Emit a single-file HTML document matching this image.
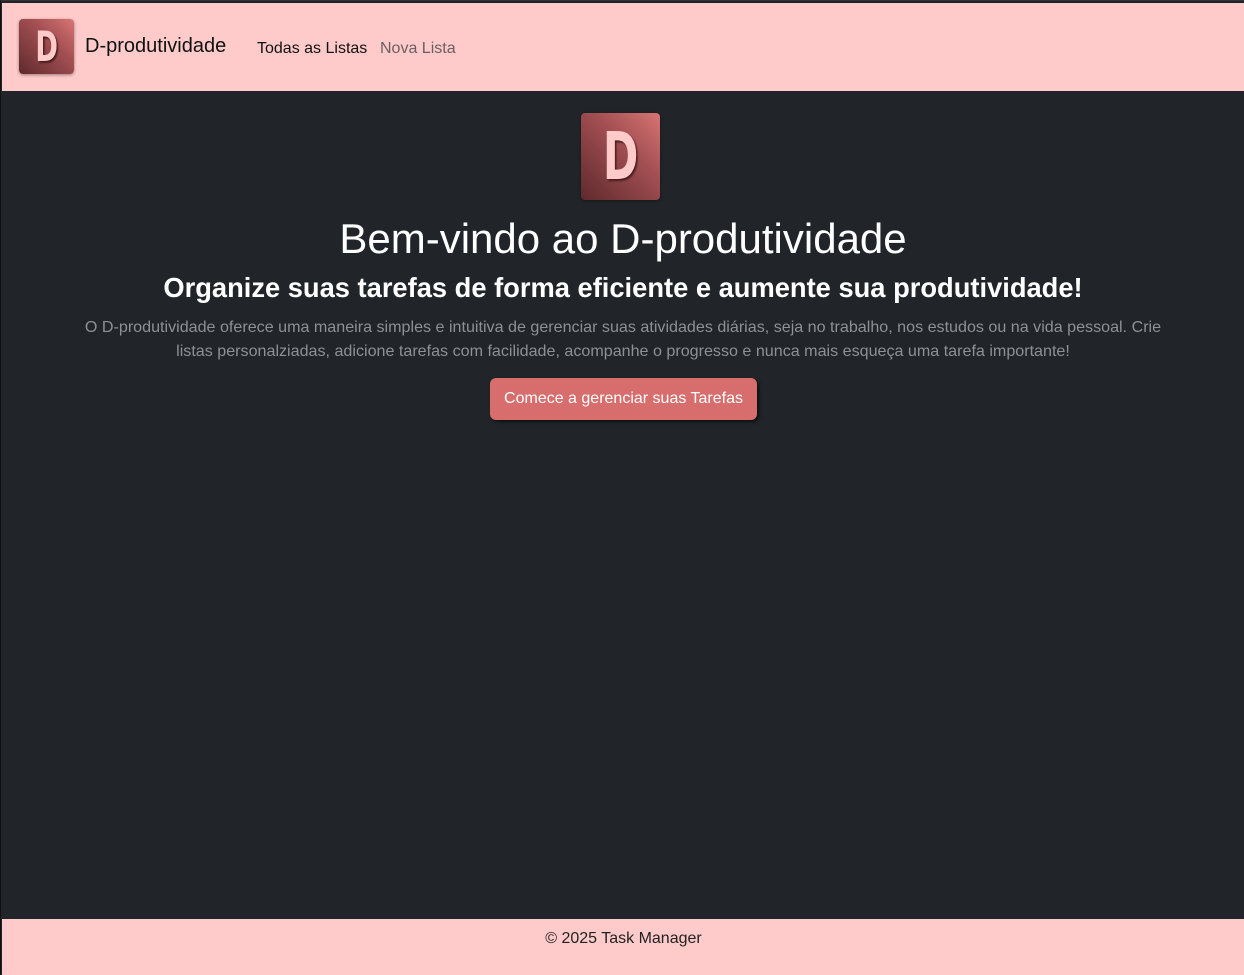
<!DOCTYPE html>
<html><head><meta charset="utf-8"><style>
*{box-sizing:border-box;margin:0;padding:0}
body{width:1244px;height:974px;background:#212529;font-family:"Liberation Sans",sans-serif;position:relative;overflow:hidden;border-left:1px solid #111;border-top:1px solid #333}
nav{position:absolute;left:1px;top:2px;width:1243px;height:88px;background:#ffcaca}
.logo{position:absolute;border-radius:4px;background:linear-gradient(45deg,#5e2a2d,#a34f52 60%,#d87474);box-shadow:0 1px 3px rgba(0,0,0,.4);color:#ffcaca;text-align:center;font-weight:bold;text-shadow:2px 2px 2px #4a1d1f;font-family:"DejaVu Sans Condensed","Liberation Sans Narrow",sans-serif}
.logo span{display:inline-block;transform:scaleX(.72)}
.brand{position:absolute;left:83px;top:32px;font-size:20px;color:#111}
.l1{position:absolute;left:255px;top:37px;font-size:16px;color:#111}
.l2{position:absolute;left:378px;top:37px;font-size:16px;color:#6c5f62}
h1{position:absolute;left:0;width:1244px;top:214px;text-align:center;color:#fff;font-size:42px;font-weight:500}
h2{position:absolute;left:0;width:1244px;top:271px;text-align:center;color:#fff;font-size:27.3px;font-weight:bold}
p{position:absolute;left:0;width:1244px;top:314px;text-align:center;color:#8d9094;font-size:16.1px;line-height:24px;white-space:nowrap}
.btn{position:absolute;left:489px;top:377px;width:267px;height:42px;background:#d76d6d;border-radius:6px;color:#fff;font-size:16px;text-align:center;line-height:42px;box-shadow:2px 2px 3px rgba(0,0,0,.6)}
footer{position:absolute;left:1px;top:918px;width:1243px;height:56px;background:#ffcaca;text-align:center;font-size:16px;color:#222;padding-top:11px}
</style></head><body>
<nav>
<div class="logo" style="left:17px;top:16px;width:55px;height:55px;font-size:42px;line-height:55px"><span>D</span></div>
<div class="brand">D-produtividade</div>
<div class="l1">Todas as Listas</div>
<div class="l2">Nova Lista</div>
</nav>
<div class="logo" style="left:580px;top:112px;width:79px;height:87px;font-size:66px;line-height:87px"><span>D</span></div>
<h1>Bem-vindo ao D-produtividade</h1>
<h2>Organize suas tarefas de forma eficiente e aumente sua produtividade!</h2>
<p>O D-produtividade oferece uma maneira simples e intuitiva de gerenciar suas atividades diárias, seja no trabalho, nos estudos ou na vida pessoal. Crie<br>listas personalziadas, adicione tarefas com facilidade, acompanhe o progresso e nunca mais esqueça uma tarefa importante!</p>
<div class="btn">Comece a gerenciar suas Tarefas</div>
<footer>© 2025 Task Manager</footer>
</body></html>
